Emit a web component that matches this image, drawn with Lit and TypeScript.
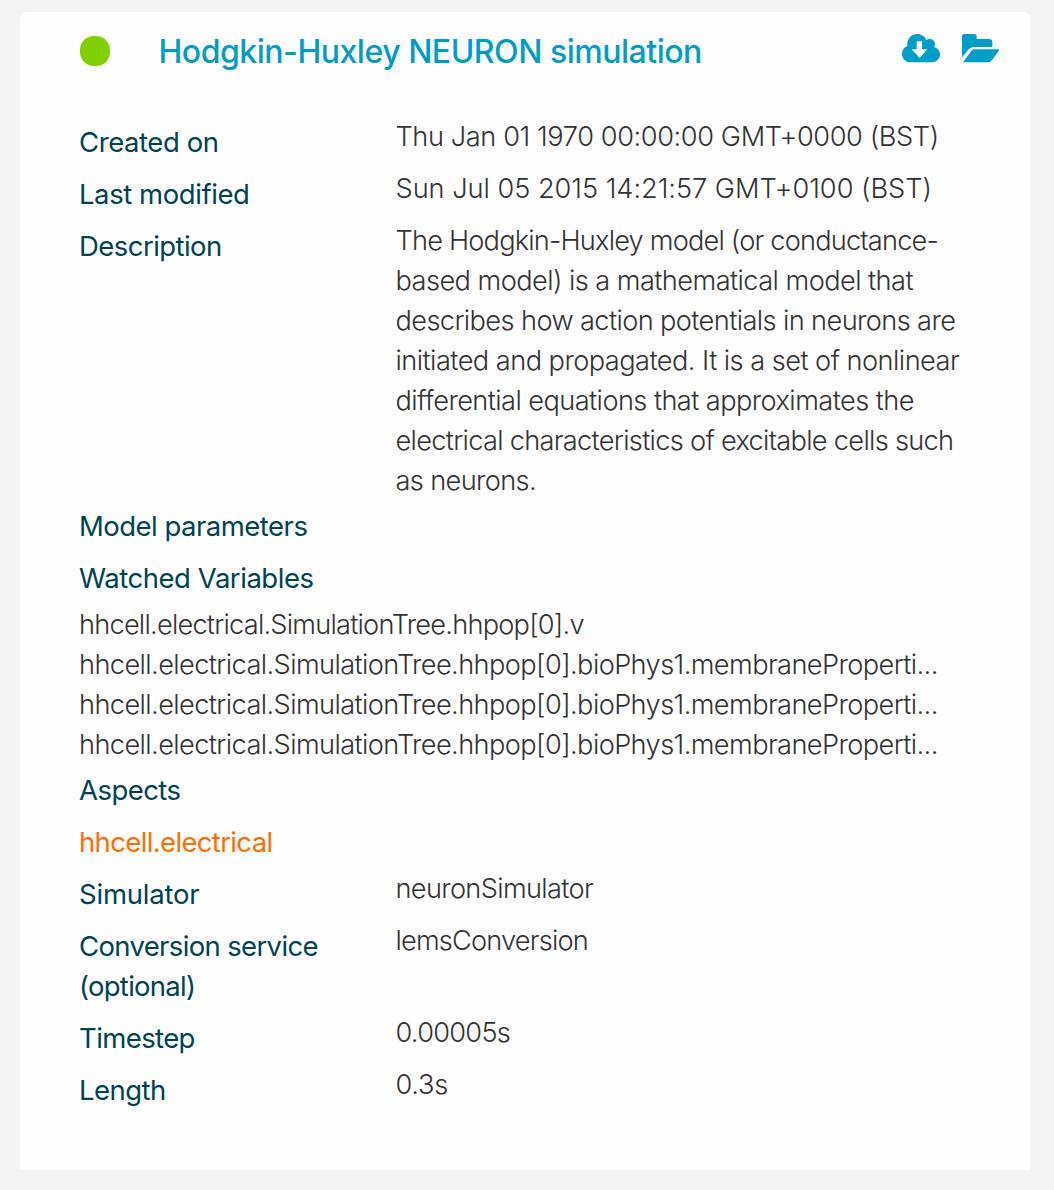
import { LitElement, html, css } from "lit";
import { customElement } from "lit/decorators.js";

/** A line of text and its tracking in px. */
type Line = [text: string, tracking: number];
interface Row {
  label: Line[];
  value?: Line[];
}

const TITLE: Line = ["Hodgkin-Huxley NEURON simulation", -0.482];

const DETAILS: Row[] = [
  { label: [["Created on", -0.42]], value: [["Thu Jan 01 1970 00:00:00 GMT+0000 (BST)", -0.41]] },
  { label: [["Last modified", -0.432]], value: [["Sun Jul 05 2015 14:21:57 GMT+0100 (BST)", -0.037]] },
  {
    label: [["Description", -0.55]],
    value: [
      ["The Hodgkin-Huxley model (or conductance-", -0.808],
      ["based model) is a mathematical model that", -0.563],
      ["describes how action potentials in neurons are", -0.608],
      ["initiated and propagated. It is a set of nonlinear", -0.544],
      ["differential equations that approximates the", -0.571],
      ["electrical characteristics of excitable cells such", -0.701],
      ["as neurons.", -0.646],
    ],
  },
  { label: [["Model parameters", -0.52]] },
  { label: [["Watched Variables", -0.46]] },
];

const MEMBRANE: Line = ["hhcell.electrical.SimulationTree.hhpop[0].bioPhys1.membraneProperti...", -0.595];
const WATCHED: Line[] = [
  ["hhcell.electrical.SimulationTree.hhpop[0].v", -0.777],
  MEMBRANE,
  MEMBRANE,
  MEMBRANE,
];

const ASPECT: Line = ["hhcell.electrical", -0.644];

const SETTINGS: Row[] = [
  { label: [["Simulator", -0.2]], value: [["neuronSimulator", -0.665]] },
  { label: [["Conversion service", -0.65], ["(optional)", -0.727]], value: [["lemsConversion", -0.818]] },
  { label: [["Timestep", -0.6]], value: [["0.00005s", -0.728]] },
  { label: [["Length", -0.538]], value: [["0.3s", -0.232]] },
];

const line = ([text, tracking]: Line) =>
  html`<span class="line" style="letter-spacing:${tracking}px">${text}</span>`;

const row = (r: Row) => html`
  <div class="row">
    <div class="label">${r.label.map(line)}</div>
    ${r.value ? html`<div class="value">${r.value.map(line)}</div>` : null}
  </div>
`;

@customElement("app-root")
export class AppRoot extends LitElement {
  static styles = css`
    :host {
      display: block;
      box-sizing: border-box;
      height: 1190px;
      padding: 12px 24px 20px 20px;
      background: #f4f4f4;
      font-family: Inter, "Liberation Sans", sans-serif;
      font-size: 27.2px;
      line-height: 40px;
    }
    .card {
      box-sizing: border-box;
      height: 1158px;
      padding: 0 31px 0 59px;
      border-radius: 6px 6px 0 0;
      background: #fefefe;
    }
    .head {
      display: flex;
      align-items: center;
      height: 78px;
      margin-bottom: 26px;
      padding-left: 1px;
    }
    .dot {
      width: 30px;
      height: 30px;
      border-radius: 14px;
      background: #80d000;
    }
    .title {
      flex: 1;
      margin: 2px 0 0 48.5px;
      color: #009dc6;
      font-size: 32px;
      font-weight: 550;
    }
    .icons {
      display: flex;
      gap: 22px;
      margin-bottom: 6px;
      fill: #009dc6;
    }
    .icons svg {
      display: block;
    }
    .row {
      display: grid;
      grid-template-columns: 316.5px 1fr;
    }
    .label {
      padding: 6px 0;
      color: #004453;
      font-size: 27.5px;
    }
    .value,
    .watched {
      margin-bottom: -1px;
      padding-top: 1px;
      color: #333;
      font-weight: 300;
    }
    .line {
      display: block;
      white-space: nowrap;
    }
    .aspect {
      padding: 6px 0;
      color: #ff6e00;
      font-size: 27.5px;
    }
  `;

  render() {
    return html`
      <section class="card">
        <header class="head">
          <span class="dot"></span>
          <h1 class="title">${line(TITLE)}</h1>
          <div class="icons">
            <svg width="38" height="29" viewBox="0 0 114 87">
              <path fill-rule="evenodd" d="M26 85C11 85 0 74 0 60C0 49 6 40 16 36C14 15 27 0 46 0C58 0 68 7 73 18C85 11 99 18 99 31C99 34 98 37 96 39C107 42 114 50 114 61C114 75 103 85 89 85ZM44 22V46H29L53 72L76 46H60V22Z" />
            </svg>
            <svg width="37" height="29" viewBox="0 0 111 87">
              <path d="M0 8Q0 0 8 0H36Q44 0 44 8V15H81Q91 15 91 25V39H36Q27 39 20 46L0 70Z" />
              <path d="M3 85L26 53Q31 46 39 46H108Q113 46 110 51L91 77Q85 85 76 85Z" />
            </svg>
          </div>
        </header>
        ${DETAILS.map(row)}
        <div class="watched">${WATCHED.map(line)}</div>
        ${row({ label: [["Aspects", -0.55]] })}
        <div class="aspect">${line(ASPECT)}</div>
        ${SETTINGS.map(row)}
      </section>
    `;
  }
}
